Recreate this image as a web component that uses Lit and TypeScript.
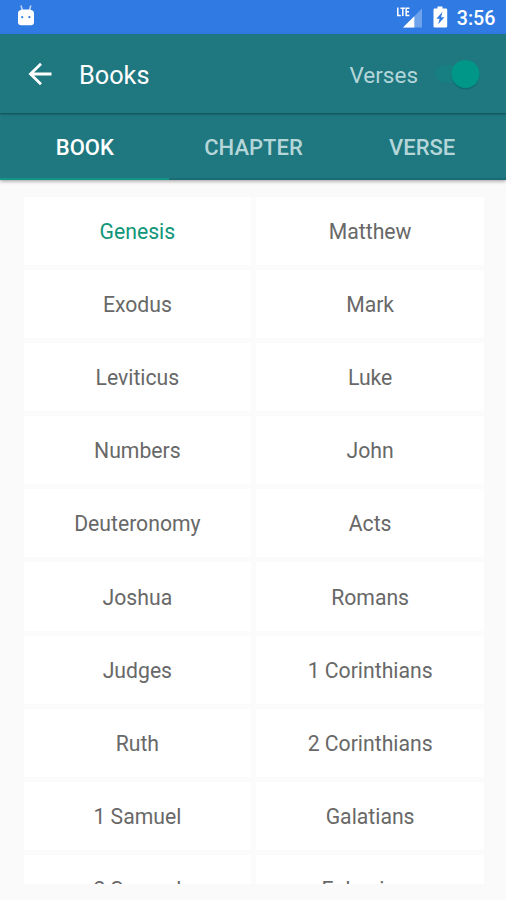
import { LitElement, html, css } from "lit";
import { customElement, state } from "lit/decorators.js";
import { classMap } from "lit/directives/class-map.js";

const OLD = ["Genesis", "Exodus", "Leviticus", "Numbers", "Deuteronomy", "Joshua", "Judges", "Ruth", "1 Samuel", "2 Samuel"];
const NEW = ["Matthew", "Mark", "Luke", "John", "Acts", "Romans", "1 Corinthians", "2 Corinthians", "Galatians", "Ephesians"];
const TABS = ["BOOK", "CHAPTER", "VERSE"];

@customElement("status-bar")
class StatusBar extends LitElement {
  static styles = css`
    :host { display: flex; align-items: center; height: 34px; padding: 0 10.5px 0 17px; box-sizing: border-box; background: #307be3; color: #fff; }
    svg { display: block; flex: none; }
    .space { flex: 1; }
    .signal { margin-right: 11px; }
    .battery { margin-right: 9px; }
    .time { font-size: 19.7px; font-weight: 500; line-height: 34px; padding-top: 3px; }
  `;
  render() {
    return html`
      <svg width="18" height="34" viewBox="0 0 18 34">
        <path d="M4 5.5 5.4 10.500M13.800 5.5 12.4 10.500" stroke="#fff" stroke-opacity=".7" stroke-width="1.500" fill="none"/>
        <path d="M1 13q0-1.800 1.600-2.400L5 9.500h8l2.400 1.100Q17 11.200 17 13V22q0 3.200-3.200 3.200H4.200Q1 25.200 1 22z" fill="#fff"/>
        <circle cx="5.200" cy="17.200" r="1.100" fill="#307be3"/><circle cx="12.400" cy="17.200" r="1.100" fill="#307be3"/>
      </svg>
      <span class="space"></span>
      <svg class="signal" width="26" height="34" viewBox="0 0 26 34">
        <path d="M26 8.500V27.500H7z" fill="#fff" opacity=".3"/>
        <path d="M18.300 16.200V27.500H7z" fill="#fff"/>
        <path d="M1.800 7.500V15.400H4.800M4.500 8.300H9M6.800 8.300V16.100M13.400 8.300H10.200V15.400H13.400M10.200 11.800H13" stroke="#fff" stroke-width="1.500" fill="none"/>
      </svg>
      <svg class="battery" width="15" height="34" viewBox="0 0 15 34">
        <path fill-rule="evenodd" d="M4.500 6.500h5v2H13q1.200 0 1.200 1.200v16.600q0 1.200-1.200 1.200H1.700Q.5 27.500.5 26.300V9.700Q.5 8.500 1.700 8.500h2.800zM9.500 11.800 3.400 18.700h3.200l-1.400 5.500 6.200-7H8.100z" fill="#fff"/>
      </svg>
      <span class="time">3:56</span>
    `;
  }
}

@customElement("tool-bar")
class ToolBar extends LitElement {
  static styles = css`
    :host { display: flex; align-items: center; height: 79px; box-sizing: border-box; padding: 0 22px 0 28px; background: #1f777f; color: #fff; box-shadow: 0 1px 2px rgba(0, 30, 40, .5); position: relative; }
    svg { display: block; flex: none; }
    .title { font-size: 25.3px; margin-left: 27px; padding-top: 3px; }
    .label { margin-left: auto; font-size: 22.500px; color: #b4d6d9; padding-top: 2px; }
    .switch { margin-left: 16px; }
  `;
  render() {
    return html`
      <svg width="24" height="24" viewBox="0 0 24 24"><path d="M23.500 12H2.500M13 1.800 2.500 12 13 22.200" stroke="#fff" stroke-width="2.800" fill="none"/></svg>
      <span class="title">Books</span>
      <span class="label">Verses</span>
      <svg class="switch" width="50" height="34" viewBox="0 0 50 34">
        <rect x="1" y="8" width="41" height="18" rx="9" fill="#009688" opacity=".25"/>
        <circle cx="31.500" cy="18.500" r="14" fill="#00565c" opacity=".4"/>
        <circle cx="31.500" cy="17" r="14" fill="#009788"/>
      </svg>
    `;
  }
}

@customElement("tab-strip")
class TabStrip extends LitElement {
  static styles = css`
    :host { display: grid; grid-template-columns: repeat(3, 1fr); height: 67px; background: #1f777f; box-shadow: 0 1px 4px rgba(0, 0, 0, .4); }
    .tab { display: flex; align-items: center; justify-content: center; box-sizing: border-box; padding: 3px 0 0 1px; border-bottom: 2px solid #1a6b73; font-size: 22px; font-weight: 500; color: #b4d6d9; }
    .active { color: #fff; border-color: #109586; }
  `;
  @state() selected = 0;
  render() {
    return TABS.map((t, i) => html`<div class=${classMap({ tab: true, active: i === this.selected })} @click=${() => (this.selected = i)}>${t}</div>`);
  }
}

@customElement("app-root")
class AppRoot extends LitElement {
  static styles = css`
    :host { display: flex; flex-direction: column; height: 900px; overflow: hidden; background: #fafafa; font-family: Roboto, "Noto Sans", sans-serif; }
    status-bar, tool-bar, tab-strip { flex: none; }
    .grid { display: grid; grid-template-columns: 1fr 1fr; column-gap: 5px; row-gap: 5px; grid-auto-rows: 68.100px; margin: 17px 22px 16px 23.500px; height: 687px; overflow: hidden; background: #fbfbfb; }
    .cell { display: flex; align-items: center; justify-content: center; padding-top: 1px; box-sizing: border-box; background: #fff; color: #686868; font-size: 21.200px; }
    .current { color: #109679; }
  `;
  @state() book = "Genesis";
  render() {
    return html`
      <status-bar></status-bar>
      <tool-bar></tool-bar>
      <tab-strip></tab-strip>
      <div class="grid">
        ${OLD.flatMap((b, i) => [b, NEW[i]]).map(
          (b) => html`<div class=${classMap({ cell: true, current: b === this.book })} @click=${() => (this.book = b)}>${b}</div>`
        )}
      </div>
    `;
  }
}
